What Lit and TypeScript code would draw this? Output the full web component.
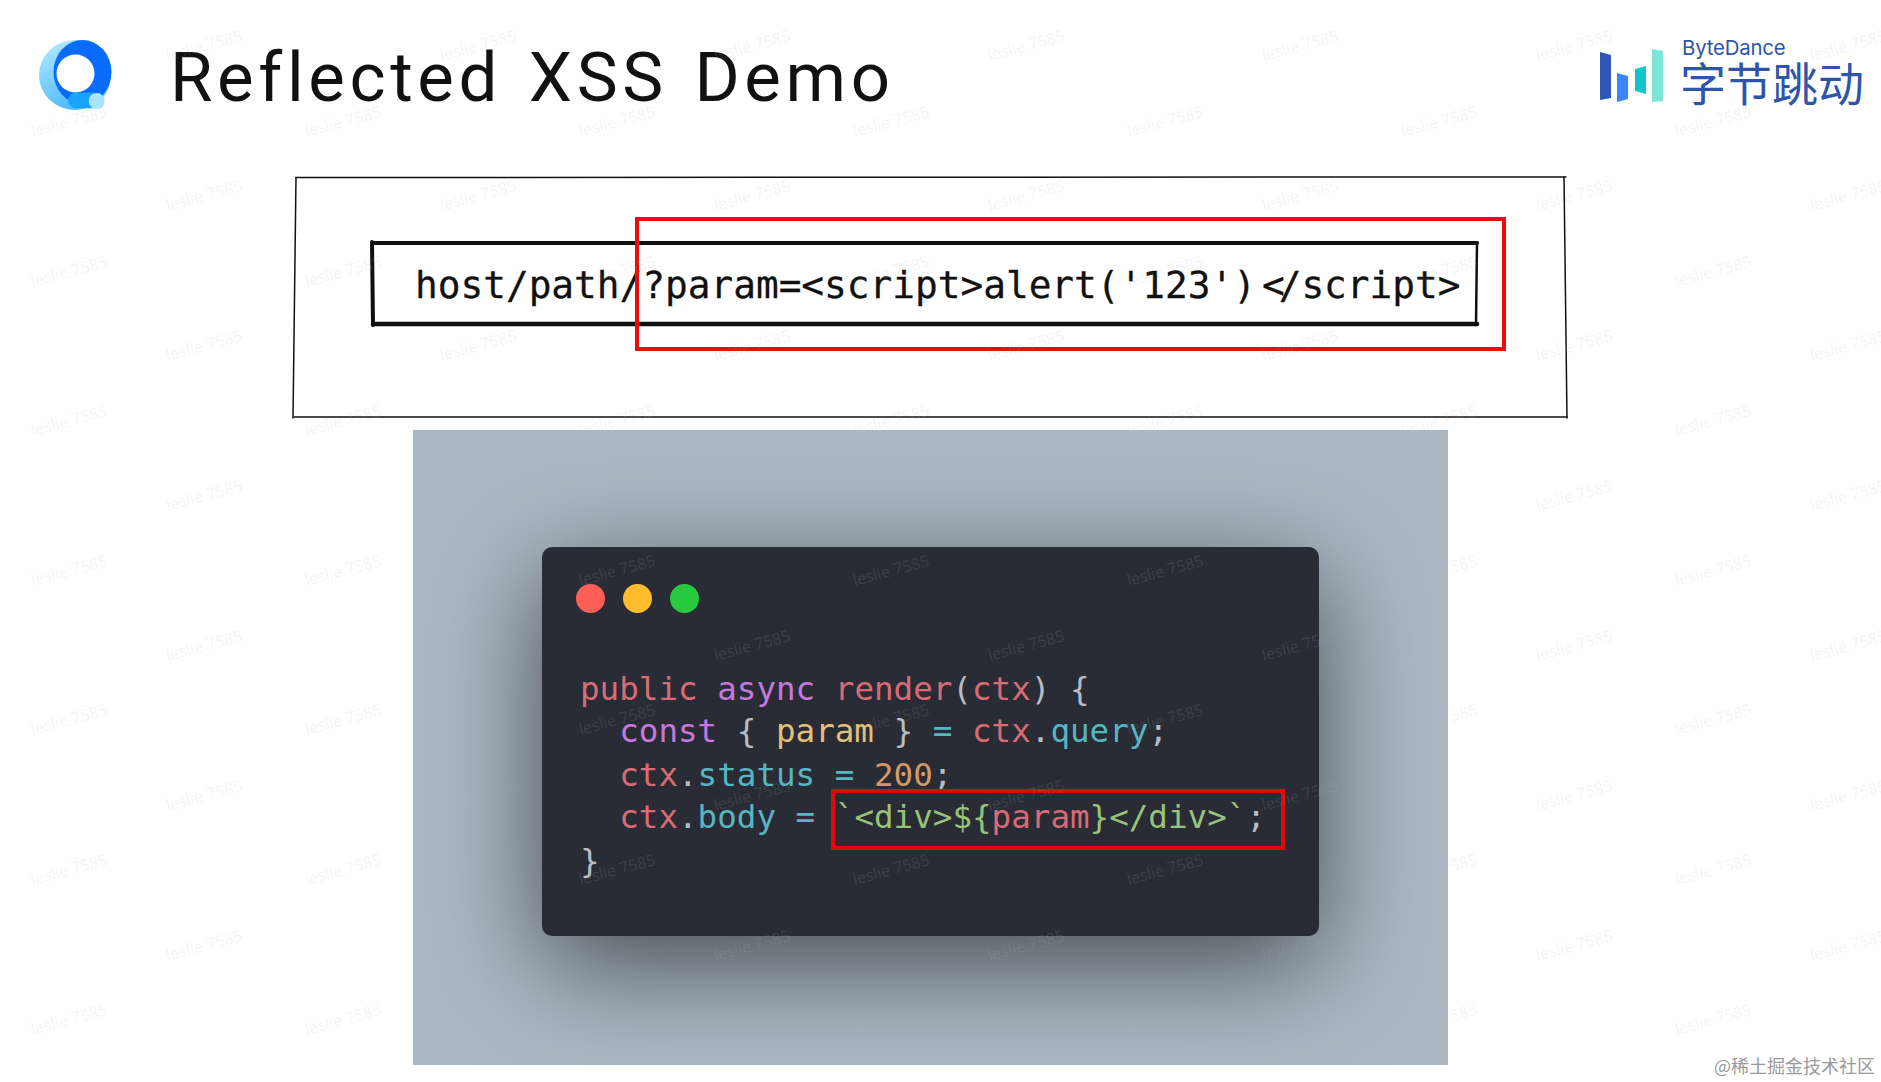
import { LitElement, html, css, svg } from "lit";
import { customElement } from "lit/decorators.js";

const marks: { x: number; y: number }[] = [];
for (let c = 0; c < 7; c++) {
  for (let r = 0; r < 7; r++) {
    marks.push({ x: 69 + 274 * c, y: 121 + 149.6 * r });
    marks.push({ x: 204 + 274 * c, y: 45 + 150 * r });
  }
}

const line = (x1: number, y1: number, x2: number, y2: number, w: number) =>
  svg`<line x1=${x1} y1=${y1} x2=${x2} y2=${y2} stroke="#111" stroke-width=${w} stroke-linecap="round"></line>`;

@customElement("app-root")
export class AppRoot extends LitElement {
  static styles = css`
    :host { display: block; position: relative; width: 1881px; height: 1082px; background: #fff; overflow: hidden; font-family: "Liberation Sans", sans-serif; }
    .header { display: flex; align-items: center; height: 150px; padding: 0 0 0 39px; box-sizing: border-box; }
    .logo { width: 73px; height: 70px; flex: none; margin-top: -1px; }
    .title { margin: 4px 0 0 58px; font: 400 69px/1 "Roboto", sans-serif; letter-spacing: 4.6px; word-spacing: 5px; color: #111; flex: 1; white-space: nowrap; }
    .brand { display: flex; gap: 16px; align-items: flex-end; margin: 0 17px 8px 0; }
    .bars { width: 64px; height: 54px; margin-bottom: 1.5px; }
    .brand-text { display: flex; flex-direction: column; color: #2f55a8; }
    .brand-en { font: 400 20.4px/19px "Inter", sans-serif; letter-spacing: -0.2px; margin-left: 2px; }
    .brand-cn { font: 400 46px/48px "Noto Sans CJK SC", sans-serif; }
    .sketch { position: relative; margin: 27px 0 0 296px; width: 1270px; height: 240px; box-sizing: border-box; padding: 66px 0 0 76px; }
    .sketch-lines { position: absolute; left: -4px; top: -4px; width: 1280px; height: 250px; }
    .url { position: relative; width: 1105px; height: 81px; box-sizing: border-box; padding: 19px 0 0 43px; font: 400 37.75px/46px "DejaVu Sans Mono", monospace; color: #111; white-space: pre; -webkit-text-stroke: 0.3px #111; }
    .lig-a { letter-spacing: 6px; }
    .lig-b { letter-spacing: -6px; }
    .red-url { position: absolute; left: 339px; top: 40px; width: 871px; height: 134px; border: 4px solid #ee0a0a; box-sizing: border-box; }
    .shot { margin: 13px 0 0 413px; width: 1035px; height: 635px; background: #abb8c3; display: flex; align-items: flex-start; justify-content: center; overflow: hidden; }
    .window { position: relative; flex: none; margin-top: 117px; width: 777px; height: 389px; background: #292c34; border-radius: 10px; box-shadow: 0 28px 110px rgba(0, 0, 0, 0.6); box-sizing: border-box; padding: 37px 0 0 34px; }
    .dots { display: flex; gap: 18px; }
    .dot { width: 29px; height: 29px; border-radius: 50%; }
    .r { background: #ff5f56; } .y { background: #ffbd2e; } .g { background: #27c93f; }
    .code { margin: 55px 0 0 4px; font: 400 32.55px/43px "DejaVu Sans Mono", monospace; color: #b8bcc4; white-space: pre; }
    .ln { height: 44px; }
    .ln:nth-child(odd) { height: 42px; }
    .k { color: #c678dd; } .v { color: #d96b74; } .c { color: #56b6c2; } .y2 { color: #e5c07b; } .n { color: #d19a66; } .s { color: #98c379; }
    .red-code { position: absolute; left: 289px; top: 242px; width: 454px; height: 61px; border: 4px solid #dc0a0a; box-sizing: border-box; }
    .marks { position: absolute; inset: 0; pointer-events: none; }
    .mark { position: absolute; transform: translate(-50%, -50%) rotate(-15deg); font: 400 16px/1 "Open Sans", sans-serif; color: rgba(170, 184, 195, 0.15); white-space: nowrap; }
    .credit { position: absolute; right: 6px; bottom: 5px; font: 400 18px/24px "Noto Sans CJK SC", sans-serif; color: #9a9a9a; }
  `;

  render() {
    return html`
      <div class="header">
        <svg class="logo" viewBox="0 0 73 70">
          <defs>
            <linearGradient id="lb" x1="0" y1="0" x2="0.4" y2="1">
              <stop offset="0" stop-color="#b8ecff"></stop>
              <stop offset="1" stop-color="#4fbcfb"></stop>
            </linearGradient>
          </defs>
          <ellipse cx="36" cy="35" rx="36" ry="35" fill="url(#lb)"></ellipse>
          <ellipse cx="43.5" cy="32" rx="29" ry="32" fill="#0a6cff"></ellipse>
          <circle cx="36.5" cy="33.5" r="19" fill="#fff"></circle>
          <rect x="29" y="52.7" width="36" height="15.6" rx="7.8" fill="#18a5ff"></rect>
          <circle cx="57.7" cy="61" r="8" fill="#a8e6ff"></circle>
        </svg>
        <h1 class="title">Reflected XSS Demo</h1>
        <div class="brand">
          <svg class="bars" viewBox="0 0 64 54">
            <polygon points="0,3 11,6 11,49 0,51" fill="#2f55b5"></polygon>
            <polygon points="17,24 28,27 28,50 17,53" fill="#3a86f8"></polygon>
            <polygon points="35,20 46,17 46,45 35,42" fill="#10c6cc"></polygon>
            <polygon points="52,0 63,2 63,52 52,53" fill="#7de6d8"></polygon>
          </svg>
          <div class="brand-text">
            <span class="brand-en">ByteDance</span>
            <span class="brand-cn">字节跳动</span>
          </div>
        </div>
      </div>
      <div class="sketch">
        <svg class="sketch-lines" viewBox="-4 -4 1280 250">
          ${line(0, 0.5, 1270, 0, 1.5)}
          ${line(0, 0.5, -3, 241, 1.5)}
          ${line(-2, 240, 1271, 240, 1.5)}
          ${line(1268, 0, 1271, 241, 1.5)}
        </svg>
        <div class="url"><svg class="sketch-lines" viewBox="-4 -4 1280 250">
            ${line(0, 0, 1105, 0, 4)}
            ${line(0, -1, 1, 82, 4)}
            ${line(1, 81, 1105, 81, 4.5)}
            ${line(1105, 0, 1104, 82, 2.5)}
          </svg>host/path/?param=&lt;script&gt;alert('123'<span class="lig-a">)</span><span class="lig-b">&lt;</span>/script&gt;</div>
        <div class="red-url"></div>
      </div>
      <div class="shot">
        <div class="window">
          <div class="dots"><div class="dot r"></div><div class="dot y"></div><div class="dot g"></div></div>
          <div class="code"><div class="ln"><span class="v">public</span> <span class="k">async</span> <span class="v">render</span>(<span class="v">ctx</span>) {</div><div class="ln">  <span class="k">const</span> { <span class="y2">param</span> } <span class="c">=</span> <span class="v">ctx</span>.<span class="c">query</span>;</div><div class="ln">  <span class="v">ctx</span>.<span class="c">status</span> <span class="c">=</span> <span class="n">200</span>;</div><div class="ln">  <span class="v">ctx</span>.<span class="c">body</span> <span class="c">=</span> <span class="s">\`&lt;div&gt;\${</span><span class="v">param</span><span class="s">}&lt;/div&gt;\`</span>;</div><div class="ln">}</div></div>
          <div class="red-code"></div>
        </div>
      </div>
      <div class="marks">
        ${marks.map((m) => html`<span class="mark" style="left:${m.x}px;top:${m.y}px">leslie 7585</span>`)}
      </div>
      <div class="credit">@稀土掘金技术社区</div>
    `;
  }
}
